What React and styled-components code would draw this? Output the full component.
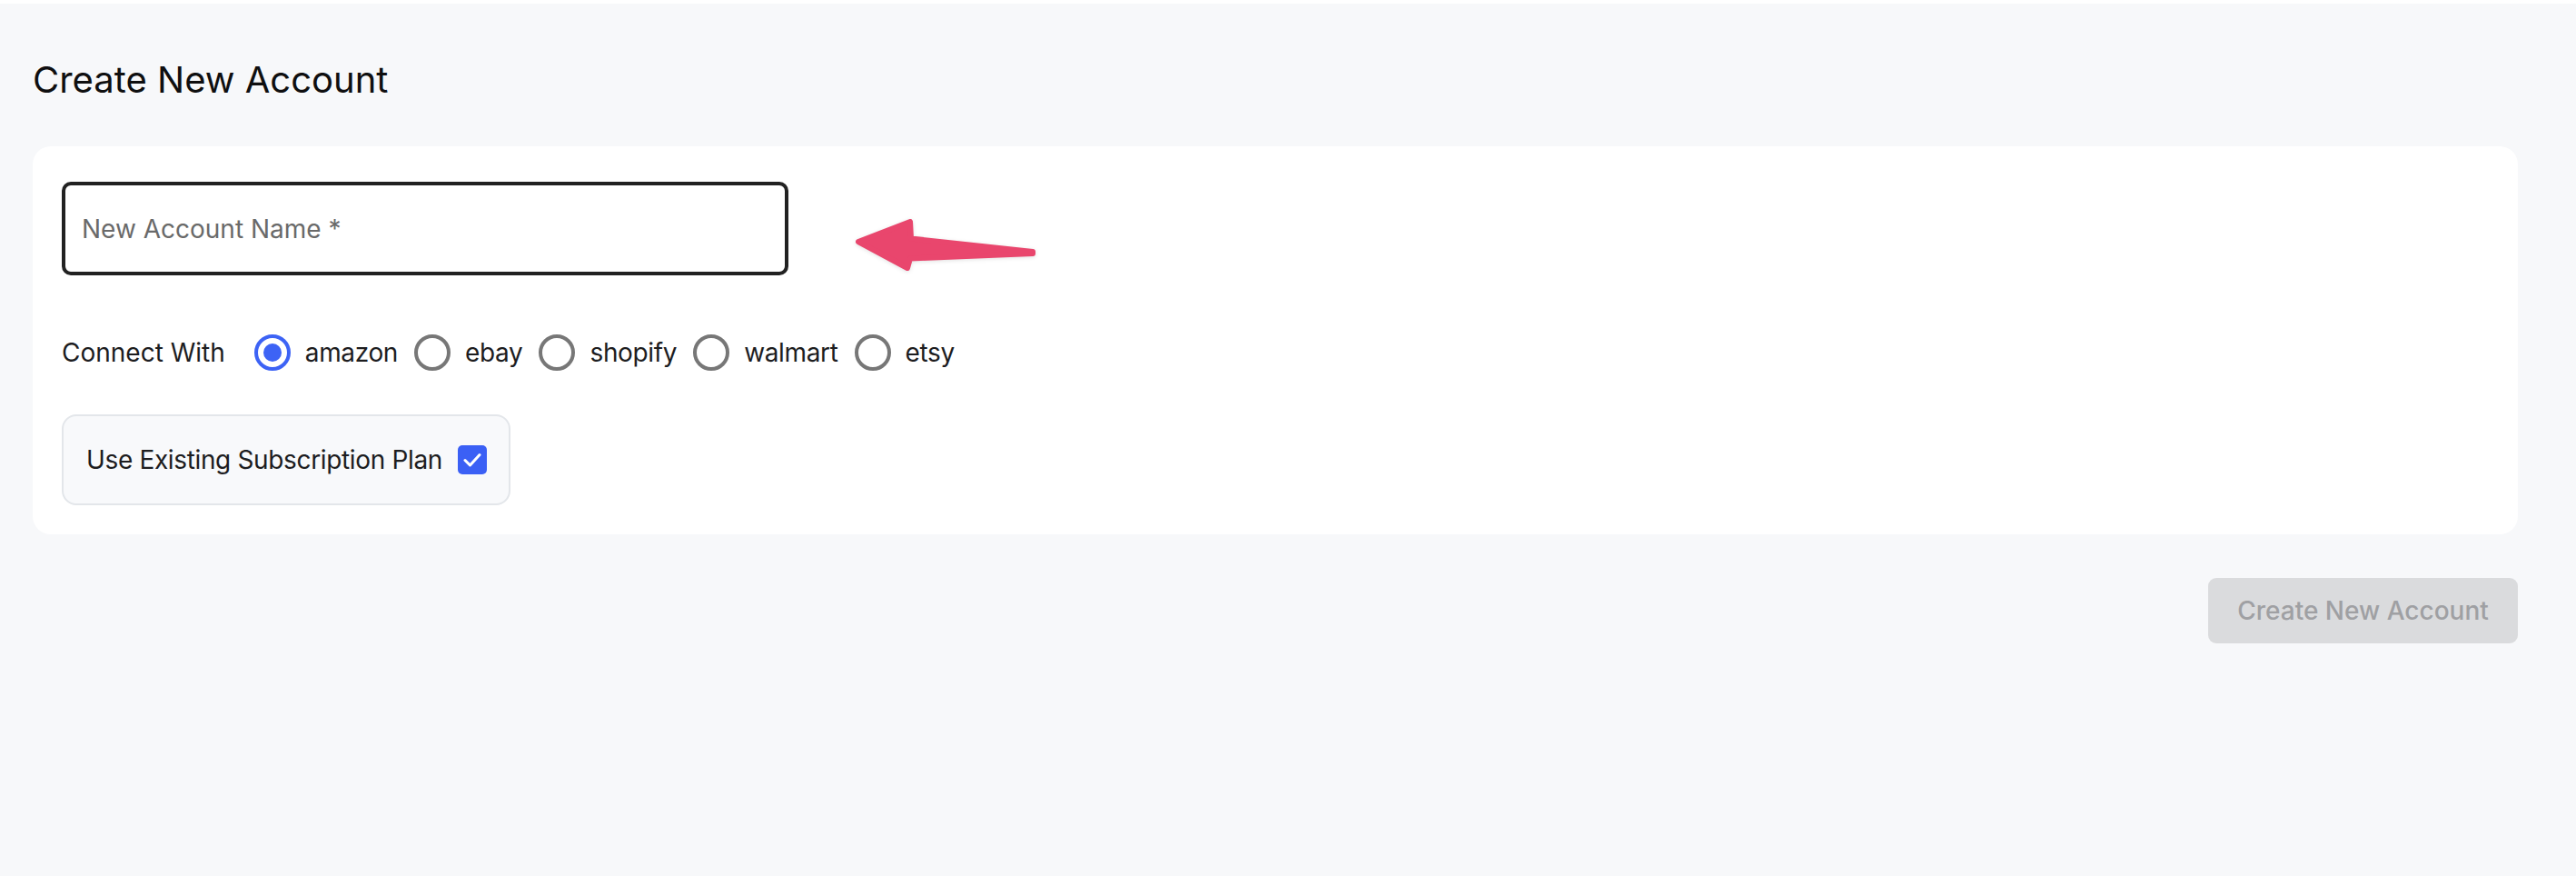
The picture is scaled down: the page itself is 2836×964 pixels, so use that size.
import React from "react";
import styled, { createGlobalStyle } from "styled-components";

const Global = createGlobalStyle`
  html, body { margin: 0; padding: 0; background: #ffffff; }
  body { font-family: Inter, "Noto Sans", "Liberation Sans", sans-serif; }
  * { box-sizing: border-box; }
`;

const Page = styled.main`
  margin-top: 4px;
  min-height: 960px;
  background: #f7f8fa;
  padding: 60px 64px 40px 36px;
`;

const Title = styled.h1`
  margin: 0;
  font-size: 40px;
  line-height: 48px;
  font-weight: 400;
  color: #0f0f10;
`;

const Card = styled.section`
  position: relative;
  margin-top: 49px;
  background: #ffffff;
  border-radius: 20px;
  padding: 39px 32px 32px;
  display: flex;
  flex-direction: column;
  align-items: flex-start;
`;

const NameInput = styled.input`
  width: 800px;
  height: 103px;
  border: 4px solid #222222;
  border-radius: 10px;
  padding: 0 18px;
  font-family: inherit;
  font-size: 28px;
  color: #222;
  background: #fff;
  outline: none;
  &::placeholder { color: #6a6a6a; }
`;

const ConnectRow = styled.div`
  margin-top: 65px;
  display: flex;
  align-items: center;
  gap: 32px;
  height: 40px;
`;

const RowLabel = styled.span`
  font-size: 28px;
  color: #1d1d1f;
`;

const Options = styled.div`
  display: flex;
  align-items: center;
  gap: 18px;
  letter-spacing: -0.35px;
`;

const Option = styled.label`
  display: flex;
  align-items: center;
  gap: 16px;
  font-size: 28px;
  color: #1d1d1f;
  cursor: pointer;
`;

const RadioRing = styled.span`
  width: 40px;
  height: 40px;
  border-radius: 50%;
  border: 4px solid ${(p) => (p.$checked ? "#3d63f5" : "#777777")};
  display: flex;
  align-items: center;
  justify-content: center;
  &::after {
    content: "";
    width: 20px;
    height: 20px;
    border-radius: 50%;
    background: ${(p) => (p.$checked ? "#3d63f5" : "transparent")};
  }
`;

const PlanBox = styled.label`
  margin-top: 48px;
  display: flex;
  align-items: center;
  gap: 17px;
  height: 100px;
  padding: 0 24px 0 25px;
  border: 2px solid #e3e6ea;
  border-radius: 16px;
  background: #f8f9fb;
  font-size: 28px;
  letter-spacing: -0.35px;
  color: #1d1d1f;
`;

const CheckBox = styled.span`
  width: 32px;
  height: 32px;
  border-radius: 5px;
  background: #3b60f5;
  display: flex;
  align-items: center;
  justify-content: center;
`;

const Arrow = styled.svg`
  position: absolute;
  left: 896px;
  top: 70px;
  width: 260px;
  height: 80px;
  overflow: visible;
  filter: drop-shadow(0 1px 2px rgba(0, 0, 0, 0.12));
`;

const Footer = styled.div`
  margin-top: 48px;
  display: flex;
  justify-content: flex-end;
`;

const SubmitButton = styled.button`
  width: 341px;
  height: 72px;
  border: none;
  border-radius: 9px;
  background: #dadbdd;
  color: #9fa0a3;
  font-family: inherit;
  font-size: 28px;
  font-weight: 500;
  cursor: not-allowed;
`;

const stores = ["amazon", "ebay", "shopify", "walmart", "etsy"];

export default function App() {
  return (
    <>
      <Global />
      <Page>
        <Title>Create New Account</Title>
        <Card>
          <NameInput placeholder="New Account Name *" />
          <Arrow viewBox="0 0 260 80">
            <polygon
              points="13,35 70,13 71,31.5 205,46 205,48 70,53.5 67,64"
              fill="#e9466d"
              stroke="#e9466d"
              strokeWidth="6"
              strokeLinejoin="round"
            />
          </Arrow>
          <ConnectRow>
            <RowLabel>Connect With</RowLabel>
            <Options>
              {stores.map((s, i) => (
                <Option key={s}>
                  <RadioRing $checked={i === 0} />
                  {s}
                </Option>
              ))}
            </Options>
          </ConnectRow>
          <PlanBox>
            Use Existing Subscription Plan
            <CheckBox>
              <svg width="22" height="22" viewBox="0 0 22 22">
                <path d="M3 11.5 L8.5 17 L19 5.5" fill="none" stroke="#fff" strokeWidth="3" strokeLinecap="round" strokeLinejoin="round" />
              </svg>
            </CheckBox>
          </PlanBox>
        </Card>
        <Footer>
          <SubmitButton disabled>Create New Account</SubmitButton>
        </Footer>
      </Page>
    </>
  );
}
